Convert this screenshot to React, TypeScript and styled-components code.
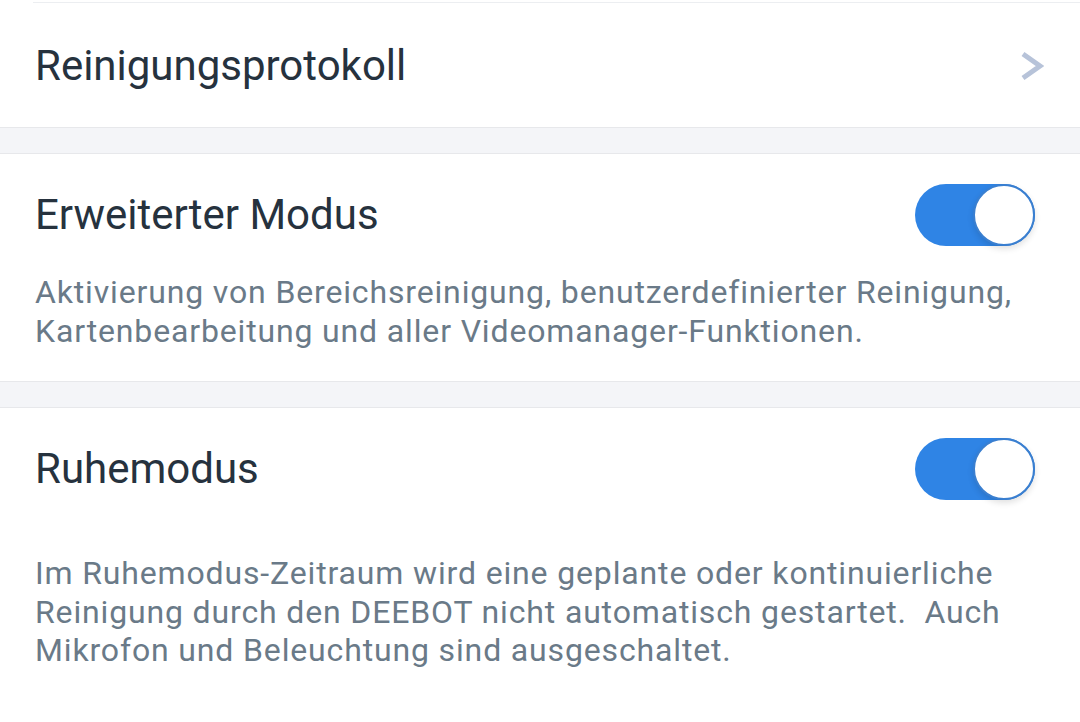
import React from "react";
import styled, { createGlobalStyle } from "styled-components";

const GlobalStyle = createGlobalStyle`
  html, body { margin: 0; padding: 0; background: #ffffff; }
  body { font-family: Roboto, "Noto Sans", sans-serif; -webkit-font-smoothing: antialiased; }
`;

const Page = styled.div`
  width: 1080px;
  height: 722px;
  overflow: hidden;
  background: #ffffff;
  display: flex;
  flex-direction: column;
`;

const TopDivider = styled.div`
  height: 2px;
  border-bottom: 1px solid #eceef1;
  margin-left: 33px;
`;

const Card = styled.section<{ $pad: string }>`
  background: #ffffff;
  padding: ${(p) => p.$pad};
  display: flex;
  flex-direction: column;
`;

const Gap = styled.div`
  height: 25px;
  background: #f4f5f8;
  border-top: 1px solid #e7e8eb;
  border-bottom: 1px solid #e7e8eb;
  flex-shrink: 0;
`;

const Row = styled.div<{ $h: number }>`
  display: flex;
  align-items: center;
  justify-content: space-between;
  height: ${(p) => p.$h}px;
`;

const Title = styled.div`
  font-size: 42px;
  line-height: 50px;
  color: #26323e;
  font-weight: 400;
`;

const Desc = styled.p<{ $mt: number }>`
  margin: ${(p) => p.$mt}px 0 0 0;
  font-size: 32px;
  letter-spacing: 0.85px;
  line-height: 38.5px;
  color: #6a7a88;
  width: 1005px;
`;

const Chevron = styled.svg`
  width: 24px;
  height: 30px;
  margin-right: 36px;
`;

const Toggle = styled.div`
  width: 120px;
  height: 62px;
  border-radius: 31px;
  background: #2f84e5;
  position: relative;
  margin-right: 45px;
  flex-shrink: 0;
`;

const Knob = styled.div`
  position: absolute;
  right: 0;
  top: 0;
  width: 58px;
  height: 58px;
  border-radius: 50%;
  background: #ffffff;
  border: 2px solid #3a7fd0;
  box-shadow: 0 3px 6px rgba(0, 0, 0, 0.12);
`;

export default function App() {
  return (
    <Page>
      <GlobalStyle />
      <TopDivider />
      <Card $pad="2px 0 0 35px">
        <Row $h={122}>
          <Title>Reinigungsprotokoll</Title>
          <Chevron viewBox="0 0 24 30">
            <path d="M3 3 L20 15 L3 27" fill="none" stroke="#b7c3d9" strokeWidth="5" strokeLinejoin="miter" />
          </Chevron>
        </Row>
      </Card>
      <Gap />
      <Card $pad="30px 0 31px 35px">
        <Row $h={62}>
          <Title>Erweiterter Modus</Title>
          <Toggle><Knob /></Toggle>
        </Row>
        <Desc $mt={27}>
          Aktivierung von Bereichsreinigung, benutzerdefinierter Reinigung, Kartenbearbeitung und aller Videomanager-Funktionen.
        </Desc>
      </Card>
      <Gap />
      <Card $pad="30px 0 0 35px">
        <Row $h={62}>
          <Title>Ruhemodus</Title>
          <Toggle><Knob /></Toggle>
        </Row>
        <Desc $mt={54}>
          Im Ruhemodus-Zeitraum wird eine geplante oder kontinuierliche Reinigung durch den DEEBOT nicht automatisch gestartet.&nbsp; Auch Mikrofon und Beleuchtung sind ausgeschaltet.
        </Desc>
      </Card>
    </Page>
  );
}
